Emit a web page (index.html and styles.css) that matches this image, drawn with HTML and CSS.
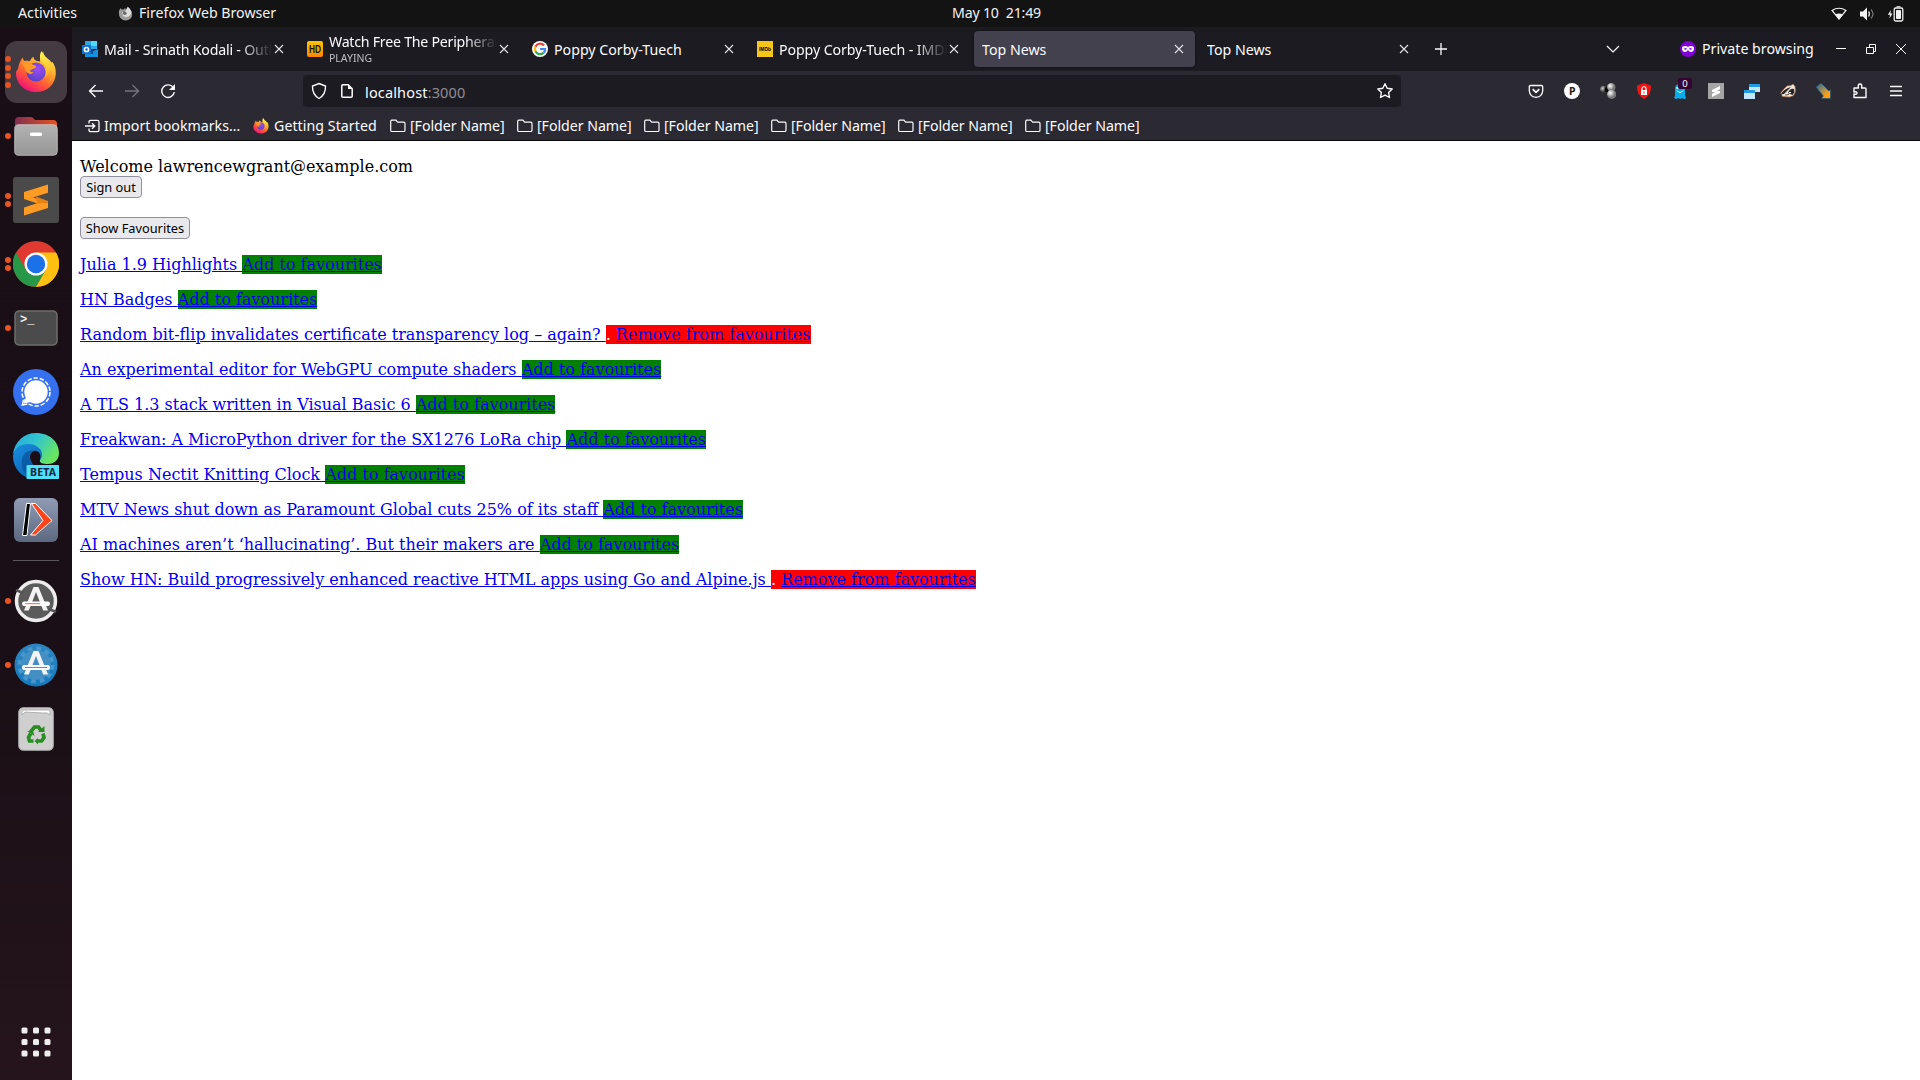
FILE: index.html
```html
<!DOCTYPE html>
<html lang="en">
<head>
<meta charset="utf-8">
<title>Top News</title>
<link rel="stylesheet" href="styles.css">
</head>
<body>
<svg class="defs" width="0" height="0" aria-hidden="true">
  <defs>
    <linearGradient id="ffBody" x1=".85" y1=".1" x2=".3" y2="1"><stop offset="0" stop-color="#fff04a"/><stop offset=".35" stop-color="#ffa52a"/><stop offset=".65" stop-color="#ff5a35"/><stop offset="1" stop-color="#f0107c"/></linearGradient>
    <linearGradient id="ffFlame" x1=".5" y1="0" x2=".6" y2="1"><stop offset="0" stop-color="#fff34f"/><stop offset=".6" stop-color="#ffc034"/><stop offset="1" stop-color="#ff8a2a"/></linearGradient>
    <radialGradient id="ffGlobe" cx=".6" cy=".35" r=".7"><stop offset="0" stop-color="#a04cf5"/><stop offset="1" stop-color="#5341c4"/></radialGradient>
    <symbol id="firefox" viewBox="0 0 40 42">
      <path d="M2 18C2.500 13 5 9 6.500 6.500C6.800 8 7.500 9.300 8.500 10C10.500 9.500 13 9.800 14 10.200C14.500 8 16 6.500 17.500 5.800C17.500 8.500 20 10.500 24 10.500C24 6 25 2.500 27 .5C28 6 33 8.500 35 13L36 10.500C39 14 40 19 39.800 23C39 34 31 41 20 41C9 41 0 33 0 22C0 20 1 19 2 18Z" fill="url(#ffBody)"/>
      <circle cx="20" cy="21" r="9.500" fill="url(#ffGlobe)"/>
      <path d="M25.500 0C23 4 23.500 9 27 12C31 15.500 31 21 29 26C33 24 34 20 33 16C36 20 36 27 32 32C40 27 40 16 34 9.500C30 6 26.500 4 25.500 0Z" fill="url(#ffFlame)"/>
      <path d="M6 12C9 10 13 11 16 13C18 14.500 21 14.500 20 16.500C18 18 15 18 14 20C15 21.500 17 21 17.500 21C15 25 10 22 9 18Z" fill="#ff9a26"/>
    </symbol>
    <symbol id="folder" viewBox="0 0 16 14"><path d="M1.700 1.200h4.200l1.700 1.900h6.100q1.300 0 1.300 1.300v6.800q0 1.300-1.300 1.300H2q-1.300 0-1.300-1.300V2.500q0-1.300 1-1.300z" fill="none" stroke="#fbfbfe" stroke-width="1.200"/></symbol>
    <symbol id="close" viewBox="0 0 10 10"><path d="M1 1l8 8M9 1L1 9" fill="none" stroke="#e4e3ea" stroke-width="1.100"/></symbol>
    <linearGradient id="metal" x2="0" y2="1"><stop stop-color="#b2b2b2"/><stop offset="1" stop-color="#969696"/></linearGradient>
    <linearGradient id="folderBack" x2="1"><stop stop-color="#812e50"/><stop offset="1" stop-color="#e95420"/></linearGradient>
    <linearGradient id="edgeTop" x2="1" y2=".5"><stop stop-color="#25a8d8"/><stop offset=".5" stop-color="#31c5d0"/><stop offset="1" stop-color="#68e660"/></linearGradient>
    <linearGradient id="edgeBlue" x2=".6" y2="1"><stop stop-color="#1b8fe0"/><stop offset="1" stop-color="#0b62b3"/></linearGradient>
    <linearGradient id="slate" x2="0" y2="1"><stop stop-color="#8f9cb4"/><stop offset="1" stop-color="#5b6880"/></linearGradient>
    <linearGradient id="softBlue" x2="0" y2="1"><stop stop-color="#2c86c2"/><stop offset="1" stop-color="#1579bd"/></linearGradient>
    <radialGradient id="ball" cx=".35" cy=".35"><stop stop-color="#fff"/><stop offset="1" stop-color="#777"/></radialGradient>
    <radialGradient id="ballDark" cx=".35" cy=".35"><stop stop-color="#ccc"/><stop offset="1" stop-color="#333"/></radialGradient>
    <linearGradient id="pencil" x2="1" y2="1"><stop stop-color="#24628e"/><stop offset=".4" stop-color="#8b8a60"/><stop offset=".75" stop-color="#ff9f12"/></linearGradient>
    <linearGradient id="hd" x2="0" y2="1"><stop stop-color="#ffc400"/><stop offset="1" stop-color="#ff8500"/></linearGradient>
  </defs>
</svg>

<header class="topbar">
  <span class="activities">Activities</span>
  <svg class="app-icon" width="15" height="15" viewBox="0 0 15 15"><path d="M1 5L2.500 2l1 1.500h2L7 2l1 2L9.500.5 12 4l1.500 1Q16 13 8 14.500Q0 14 1 5z" fill="#9b9b9b"/><path d="M4 6q4 0 4-2l2-3q4 3 3 7-3 5-8 2z" fill="#ddd"/><path d="M5 5l3 1q2 2-1 3-3 0-2-4z" fill="#6d6d6d"/></svg>
  <span class="app-name">Firefox Web Browser</span>
  <span class="clock">May 10&nbsp; 21:49</span>
  <div class="system">
    <svg width="16" height="14" viewBox="0 0 16 14"><path d="M1 3.500Q8-1 15 3.500L8 12z" fill="none" stroke="#f2f2f2" stroke-width="1.200"/><path d="M4.200 7.500Q8 5.500 11.800 7.500L8 12.500z" fill="#f2f2f2"/></svg>
    <svg width="16" height="14" viewBox="0 0 16 14"><path d="M1 4.500h3L8 .5v13l-4-4H1z" fill="#f2f2f2"/><path d="M9.500 4.500q2 2.500 0 5" fill="none" stroke="#ddd" stroke-width="1.300"/><path d="M12 2.500q4 4.500 0 9" fill="none" stroke="#777" stroke-width="1.200"/></svg>
    <svg width="17" height="16" viewBox="0 0 17 16"><path d="M4 4L.8 8.800H3L2.500 12.500 5.500 7.500H3.400z" fill="#f2f2f2"/><rect x="7.200" y="2" width="8.600" height="13" rx="1.500" fill="none" stroke="#f2f2f2" stroke-width="1.300"/><path d="M9.500 .7h4M9.500 4.500h4v8h-4z" fill="#f2f2f2" stroke="#f2f2f2"/></svg>
  </div>
</header>

<div class="desktop">
  <nav class="dock">
    <div class="app app-active"><i class="dots"><b></b><b></b><b></b><b></b></i><svg width="40" height="42"><use href="#firefox"/></svg></div>
    <div class="app"><i class="dots"><b></b></i>
      <svg width="44" height="40" viewBox="0 0 44 40"><path d="M1 5q0-4 4-4h12q2 0 4 3h18q4 0 4 4v18H1z" fill="url(#folderBack)"/><rect x=".7" y="8.700" width="42.600" height="30.600" rx="4" fill="url(#metal)" stroke="#c6c6c6" stroke-width=".8"/><rect x="16" y="16.500" width="12" height="3.500" rx="1.500" fill="#fff"/></svg></div>
    <div class="app"><i class="dots"><b></b><b></b></i>
      <svg width="46" height="46" viewBox="0 0 46 46"><rect width="46" height="46" rx="3" fill="#4a4a4a"/><path d="M11 15L35 7.500v8.300L20 20.500 35 25v6L11 38.500v-8l13-4.200L11 22z" fill="#ff9a22"/><path d="M23 19.500L35 24v2l-11 0.500z" fill="#e78312"/></svg></div>
    <div class="app"><i class="dots"><b></b><b></b></i>
      <svg width="46" height="46" viewBox="0 0 46 46"><circle cx="23" cy="23" r="23" fill="#e03a30"/><path d="M3 11.500L13 29 23 34.500 33 28.800 23 46A23 23 0 0 1 3 11.500z" fill="#279847"/><path d="M23 11.500h20A23 23 0 0 1 23 46l10-17.200z" fill="#fcc010"/><circle cx="23" cy="23" r="11.500" fill="#fff"/><circle cx="23" cy="23" r="9.200" fill="#1b72e8"/></svg></div>
    <div class="app"><i class="dots"><b></b></i>
      <svg width="44" height="36" viewBox="0 0 44 36"><rect x="1" y="1" width="42" height="34" rx="4" fill="#4b4b4b" stroke="#6e6e6e" stroke-width="1.500"/><text x="6" y="13" class="term">&gt;_</text></svg></div>
    <div class="app">
      <svg width="46" height="46" viewBox="0 0 46 46"><circle cx="23" cy="23" r="23" fill="#3470ef"/><circle cx="23" cy="23" r="14" fill="none" stroke="#fff" stroke-width="1.500" stroke-dasharray="4.500 1.800"/><circle cx="23" cy="23" r="11.700" fill="#fff"/><path d="M13 28l-2.500 6.500L18 33z" fill="#fff"/><path d="M10.500 31l-1.200 5 5-1" fill="none" stroke="#fff" stroke-width="1.400"/></svg></div>
    <div class="app">
      <svg width="46" height="46" viewBox="0 0 46 46"><path d="M0 21C2 8 11 0 23 0c14 0 23 9 23 20 0 7-5 11-11 11-5 0-9-1-8-4 3-5 0-9-5-10C12 13 3 16 0 21z" fill="url(#edgeTop)"/><path d="M0 23C1 15 7 11 15 11c8 0 14 5 14 10 0 3-1 5-2 6C29 21 25 17 21 18c-4 1-5 6-3 10 2 5 6 8 12 10l-8 8C9 46 0 35 0 23z" fill="url(#edgeBlue)"/><path d="M9 32C8 22 13 17 20 18c-4 2-4 7-2 11l5 8-3 9C14 44 9 38 9 32z" fill="#08549c" opacity=".75"/><rect x="13.500" y="32" width="32.500" height="14" rx="1" fill="#50e0fa"/><text x="17" y="43" class="beta" textLength="26">BETA</text></svg></div>
    <div class="app">
      <svg width="46" height="46" viewBox="0 0 46 46"><rect x="1" y="1" width="44" height="44" rx="6" fill="url(#slate)"/><path d="M13.500 6.500h4L14 38.500H9.500z" fill="#000" stroke="#fff"/><path d="M18.500 6.500h4L39 23.500 22.500 38h-5L30 23.500z" fill="#ff431b" stroke="#fff"/></svg></div>
    <div class="separator"></div>
    <div class="app"><i class="dots"><b></b></i>
      <svg width="44" height="44" viewBox="0 0 44 44"><circle cx="22" cy="22" r="19.500" fill="#5b5b5b" stroke="#ededed" stroke-width="3.500"/><path d="M2 11l7 3M35 30l7 3" stroke="#555" stroke-width="2.500"/><path d="M10 31.500L19.500 8h5L34 31.500h-4.800L22 13 14.800 31.500z" fill="#f4f4f4"/><rect x="8" y="22.500" width="28" height="4.500" rx="2.200" fill="#fff"/><path d="M11 24.700h15" stroke="#ed6537"/></svg></div>
    <div class="app"><i class="dots"><b></b></i>
      <svg width="44" height="44" viewBox="0 0 44 44"><circle cx="22" cy="22" r="21.500" fill="url(#softBlue)"/><circle cx="22" cy="22" r="16.500" fill="none" stroke="#4a97cb" stroke-width="4" stroke-dasharray="4.600 4.040"/><circle cx="22" cy="22" r="15" fill="#438fc4"/><path d="M10 31.500L19.500 8h5L34 31.500h-4.800L22 13 14.800 31.500z" fill="#f4f4f4"/><rect x="8" y="22" width="28" height="5" rx="2.500" fill="#fff"/><path d="M11 24.500h22" stroke="#4796cf"/></svg></div>
    <div class="app">
      <svg width="36" height="44" viewBox="0 0 36 44"><rect x=".7" y=".7" width="34.600" height="42.600" rx="4.500" fill="#cfcfcf" stroke="#aaa"/><path d="M4 8V5q0-2 3-2h23q2 0 2 2v3q-2-3-7-2L7 5z" fill="#fff" stroke="#999" stroke-width=".7"/><g fill="none" stroke="#278d20" stroke-width="3.700"><path d="M12.500 25l4-5h4l3 4"/><path d="M25 26.500l1 4-2.500 3.500H19"/><path d="M15.500 34h-4l-1-3.500 2.200-4"/></g><path d="M20 25h6.500v-6zM20 31v6.500L16.500 34zM9 24h6l1.500 5z" fill="#278d20"/></svg></div>
    <svg class="all-apps" width="30" height="30" viewBox="0 0 30 30" fill="#eee"><g id="dotRow"><rect x=".5" y=".5" width="6" height="6" rx="1.500"/><rect x="12" y=".5" width="6" height="6" rx="1.500"/><rect x="23.500" y=".5" width="6" height="6" rx="1.500"/></g><use href="#dotRow" y="11.500"/><use href="#dotRow" y="23"/></svg>
  </nav>

  <section class="window">
    <div class="tabs">
      <div class="tab"><svg width="16" height="16" viewBox="0 0 16 16"><path d="M3 0h12v8H3z" fill="#28a8ea"/><path d="M9 0h6v5H9z" fill="#50d9ff"/><path d="M3 8l6 3 7-3v8H3z" fill="#1490df"/><path d="M3 8h8v5H3z" fill="#0a4d94"/><rect y="4" width="9" height="9" fill="#1473c8"/><circle cx="4.500" cy="8.500" r="2.100" fill="none" stroke="#fff" stroke-width="1.500"/></svg><span class="label fade tight">Mail - Srinath Kodali - Outl</span><svg class="x"><use href="#close"/></svg></div>
      <div class="tab"><svg width="16" height="16" viewBox="0 0 16 16"><rect width="16" height="16" rx="2" fill="url(#hd)"/><text x="2" y="12" class="hd" textLength="12" lengthAdjust="spacingAndGlyphs">HD</text></svg><span class="label stack fade"><span class="tighter">Watch Free The Peripheral</span><small>PLAYING</small></span><svg class="x"><use href="#close"/></svg></div>
      <div class="tab"><svg width="16" height="16" viewBox="0 0 16 16"><circle cx="8" cy="8" r="8" fill="#fff"/><g fill="none" stroke-width="2.200"><path d="M12 4.500A5.200 5.200 0 0 0 3.400 5.700" stroke="#ea4335"/><path d="M3.400 5.700a5.200 5.200 0 0 0 0 4.600" stroke="#fbbc05"/><path d="M3.400 10.300A5.200 5.200 0 0 0 11.500 11.900" stroke="#34a853"/><path d="M11.500 11.900Q13.200 10.500 13.100 8H8" stroke="#4285f4"/></g></svg><span class="label">Poppy Corby-Tuech</span><svg class="x"><use href="#close"/></svg></div>
      <div class="tab"><svg width="16" height="16" viewBox="0 0 16 16"><rect width="16" height="16" fill="#f5c518"/><text x="2" y="10.300" class="imdb" textLength="12" lengthAdjust="spacingAndGlyphs">IMDb</text></svg><span class="label fade snug">Poppy Corby-Tuech - IMDb</span><svg class="x"><use href="#close"/></svg></div>
      <div class="tab tab-active"><span class="label">Top News</span><svg class="x"><use href="#close"/></svg></div>
      <div class="tab"><span class="label">Top News</span><svg class="x"><use href="#close"/></svg></div>
      <svg class="new-tab" width="14" height="14" viewBox="0 0 14 14"><path d="M7 1v12M1 7h12" stroke="#fbfbfe" stroke-width="1.300"/></svg>
      <svg class="tab-list" width="14" height="8" viewBox="0 0 14 8"><path d="M1 1l6 6 6-6" fill="none" stroke="#fbfbfe" stroke-width="1.200"/></svg>
      <svg class="mask" width="16" height="16" viewBox="0 0 16 16"><circle cx="8" cy="8" r="8" fill="#8000d7"/><path d="M2 7q0-2 3-2 2 0 3 1 1-1 3-1 3 0 3 2 0 4-3 4-2 0-3-2-1 2-3 2-3 0-3-4z" fill="#fff"/><path d="M4 8q1.500-2 3 0-1.500 1.500-3 0zM9 8q1.500-2 3 0-1.500 1.500-3 0z" fill="#8000d7"/></svg>
      <span class="private">Private browsing</span>
      <div class="win-buttons">
        <svg width="12" height="12" viewBox="0 0 12 12"><path d="M1 5.500h10" stroke="#fff"/></svg>
        <svg width="12" height="12" viewBox="0 0 12 12"><path d="M1.500 4.500h7v6h-7zM4.500 4V1.500h6v7H9" fill="none" stroke="#fff"/></svg>
        <svg width="12" height="12" viewBox="0 0 12 12"><path d="M1 1l10 10M11 1L1 11" stroke="#fff" stroke-width="1"/></svg>
      </div>
    </div>

    <div class="toolbar">
      <div class="nav-buttons">
        <svg width="16" height="16" viewBox="0 0 16 16"><path d="M15 8H1.500M7.500 2L1.500 8l6 6" fill="none" stroke="#fbfbfe" stroke-width="1.300"/></svg>
        <svg width="16" height="16" viewBox="0 0 16 16"><path d="M1 8h13.500M8.500 2l6 6-6 6" fill="none" stroke="#76757e" stroke-width="1.300"/></svg>
        <svg width="16" height="16" viewBox="0 0 16 16"><path d="M13.500 5A6.300 6.300 0 1 0 14.300 9" fill="none" stroke="#fbfbfe" stroke-width="1.400"/><path d="M15 1v6H9z" fill="#fbfbfe"/></svg>
      </div>
      <div class="urlbar">
        <svg width="16" height="18" viewBox="0 0 16 18"><path d="M8 1.500L14.500 4q.3 8.500-6.500 12.500Q1.200 12.500 1.500 4z" fill="none" stroke="#fbfbfe" stroke-width="1.400"/></svg>
        <svg width="14" height="16" viewBox="0 0 14 16"><path d="M2.800 1.800h5.400l4 4v7.400q0 1-1 1H2.800q-1 0-1-1V2.800q0-1 1-1z" fill="none" stroke="#fbfbfe" stroke-width="1.500"/><path d="M8 1.500V6h4.500z" fill="#fbfbfe"/></svg>
        <span class="url">localhost<em>:3000</em></span>
        <svg class="star" width="18" height="18" viewBox="0 0 18 18"><path d="M9 1.700l2.200 4.600 5 .7-3.600 3.500.9 5L9 13.100l-4.500 2.400.9-5L1.800 7l5-.7z" fill="none" stroke="#fbfbfe" stroke-width="1.400" stroke-linejoin="round"/></svg>
      </div>
      <div class="extensions">
        <svg viewBox="0 0 16 16"><path d="M2.500 2.500h11q1.200 0 1.200 1.200V8Q14 14 8 14.300 2 14 1.300 8V3.700q0-1.200 1.200-1.200z" fill="none" stroke="#fbfbfe" stroke-width="1.300"/><path d="M4.700 6.200L8 9.400l3.300-3.200" fill="none" stroke="#fbfbfe" stroke-width="1.700"/></svg>
        <svg viewBox="0 0 16 16"><circle cx="8" cy="8" r="8" fill="#fff"/><text x="5" y="12" class="letter-p">P</text></svg>
        <svg viewBox="0 0 16 16"><circle cx="3.700" cy="6.500" r="3.700" fill="url(#ballDark)"/><circle cx="7.500" cy="6.500" r="2.800" fill="#080808"/><circle cx="11.300" cy="4.200" r="4.200" fill="url(#ball)"/><circle cx="11.700" cy="11.300" r="4.600" fill="url(#ball)"/></svg>
        <svg viewBox="0 0 16 16"><path d="M8 0l7 2.500Q15.500 12 8 16 .5 12 1 2.500z" fill="#f31310"/><rect x="5" y="7" width="6" height="5" fill="#fff"/><path d="M6 7V5q2-3 4 0v2" fill="none" stroke="#fff" stroke-width="1.200"/><path d="M8 8.500v2" stroke="#f31310"/></svg>
        <div class="badged"><svg viewBox="0 0 16 16"><path d="M3 13V6q0-5 5-5t5 5v6l1 3.500-2.500.5-1.500-1-2 1-2-1-2 1-2-1z" fill="#00aef0"/><path d="M5 7.500q3 4 6 0" fill="none" stroke="#fff"/><path d="M4.500 4h2v2h-2z" fill="#fff"/></svg><span>0</span></div>
        <svg viewBox="0 0 16 16"><rect width="16" height="16" fill="#a5a5a5"/><path d="M4 7l8-4v3L9 8h3v2l-8 4v-3l3-2H4z" fill="#fff"/></svg>
        <svg viewBox="0 0 16 16"><path d="M5 1h11v3H5zM0 7h11v3H0z" fill="#229be6"/><path d="M5 4h11v5h-5V7H5zM0 10h11v6H0z" fill="#c5e5fb"/></svg>
        <svg viewBox="0 0 16 16"><path d="M.7 10L4 6l3-3 4-.5 2-1.500 2 2.500.5 5-2 4-4 1.500-7-.5z" fill="#efe8df" stroke="#b0703f" stroke-width=".7"/><path d="M.8 11.500Q3 7 8 5l3-1-3 3-4 4zM8 10q2-5 6-4l.5 3-2 3z" fill="#282522"/><path d="M9 9.500h2" stroke="#fff"/><path d="M5 12l4-.5" stroke="#6b5546"/></svg>
        <svg viewBox="0 0 16 16"><path d="M0 4l5-4 8 8 1.500-1.500V15.500H5.500L7.300 13z" fill="url(#pencil)" stroke="#1d5077" stroke-width=".7"/></svg>
        <svg viewBox="0 0 16 16"><path d="M2 14.500V11q3 .8 3-1t-3-1V5h4.500Q5.500 1 8 1t1.500 4H13q1 0 1 1v8.500z" fill="none" stroke="#fbfbfe" stroke-width="1.400" stroke-linejoin="round"/></svg>
        <svg viewBox="0 0 16 16"><path d="M2 3.500h12M2 8h12M2 12.500h12" stroke="#fbfbfe" stroke-width="1.300"/></svg>
      </div>
    </div>

    <div class="bookmarks">
      <div class="bm bm-import"><svg width="15" height="14" viewBox="0 0 15 14"><path d="M4 4.500V3q0-1.700 1.700-1.700h6.600Q14 1.300 14 3v8q0 1.700-1.700 1.700H5.700Q4 12.700 4 11V9.500M0 7h9.500M7 4.200L9.800 7 7 9.800" fill="none" stroke="#fbfbfe" stroke-width="1.300"/></svg><span>Import bookmarks…</span></div>
      <div class="bm bm-start"><svg width="16" height="16"><use href="#firefox"/></svg><span>Getting Started</span></div>
      <div class="bm"><svg width="16" height="14"><use href="#folder"/></svg><span>[Folder Name]</span></div>
      <div class="bm"><svg width="16" height="14"><use href="#folder"/></svg><span>[Folder Name]</span></div>
      <div class="bm"><svg width="16" height="14"><use href="#folder"/></svg><span>[Folder Name]</span></div>
      <div class="bm"><svg width="16" height="14"><use href="#folder"/></svg><span>[Folder Name]</span></div>
      <div class="bm"><svg width="16" height="14"><use href="#folder"/></svg><span>[Folder Name]</span></div>
      <div class="bm"><svg width="16" height="14"><use href="#folder"/></svg><span>[Folder Name]</span></div>
    </div>

    <main class="page">
      <div class="welcome">Welcome lawrencewgrant@example.com</div>
      <button class="btn sign-out">Sign out</button>
      <button class="btn favourites">Show Favourites</button>
      <p><a href="#">Julia 1.9 Highlights </a><a href="#" class="add">Add to favourites</a></p>
      <p><a href="#">HN Badges </a><a href="#" class="add">Add to favourites</a></p>
      <p><a href="#">Random bit-flip invalidates certificate transparency log – again? </a><span class="remove">. <a href="#">Remove from favourites</a></span></p>
      <p><a href="#">An experimental editor for WebGPU compute shaders </a><a href="#" class="add">Add to favourites</a></p>
      <p><a href="#">A TLS 1.3 stack written in Visual Basic 6 </a><a href="#" class="add">Add to favourites</a></p>
      <p><a href="#">Freakwan: A MicroPython driver for the SX1276 LoRa chip </a><a href="#" class="add">Add to favourites</a></p>
      <p><a href="#">Tempus Nectit Knitting Clock </a><a href="#" class="add">Add to favourites</a></p>
      <p><a href="#">MTV News shut down as Paramount Global cuts 25% of its staff </a><a href="#" class="add">Add to favourites</a></p>
      <p><a href="#">AI machines aren’t ‘hallucinating’. But their makers are </a><a href="#" class="add">Add to favourites</a></p>
      <p><a href="#">Show HN: Build progressively enhanced reactive HTML apps using Go and Alpine.js </a><span class="remove">. <a href="#">Remove from favourites</a></span></p>
    </main>
  </section>
</div>
</body>
</html>
```

FILE: styles.css
```css
* { box-sizing: border-box; }
body { margin: 0; width: 1920px; height: 1080px; overflow: hidden; display: flex; flex-direction: column; font: 14.2px/20px "Noto Sans", "Open Sans", sans-serif; color: #fbfbfe; }
svg { display: block; flex: none; }
.defs { position: absolute; }

.topbar { height: 27px; flex: none; background: #131313; display: grid; grid-template-columns: 100px 21px 813px 1fr auto; align-items: center; padding: 0 16px 0 18px; color: #f2f2f2; }
.activities, .app-name, .clock { white-space: nowrap; padding-bottom: 2px; }
.clock { letter-spacing: -.2px; }
.system { display: flex; align-items: center; gap: 12px; }

.desktop { flex: 1; display: flex; min-height: 0; }
.dock { width: 72px; flex: none; background: linear-gradient(#190e15, #1a0f16 60%, #25141c); padding: 13px 0 23px; display: flex; flex-direction: column; align-items: center; }
.app { width: 72px; height: 64px; flex: none; display: grid; place-items: center; position: relative; }
.app-active { width: 62px; height: 62px; margin: 1px 0; border-radius: 12px; background: #443a41; }
.dots { position: absolute; left: 5px; top: 0; bottom: 0; display: flex; flex-direction: column; justify-content: center; gap: 2.400px; }
.app-active .dots { left: 0; }
.dots b { width: 6px; height: 6px; border-radius: 50%; background: #e95420; }
.separator { width: 46px; height: 1px; margin: 8px 0; background: #5c5559; }
.all-apps { margin-top: auto; }
.term { font: bold 12px "Liberation Mono", monospace; fill: #eee; }
.beta { font: bold 10.500px "Noto Sans", sans-serif; fill: #14243a; }
.hd { font: bold 10px "Liberation Sans", sans-serif; fill: #151515; }
.imdb { font: bold 6px "Liberation Sans", sans-serif; fill: #000; }
.letter-p { font: bold 10.500px "Noto Sans", sans-serif; fill: #222; }

.window { flex: 1; min-width: 0; display: flex; flex-direction: column; background: #fff; }
.tabs { height: 44px; background: #1c1b22; display: flex; align-items: center; padding: 0 13px 0 2px; }
.tab { width: 221px; height: 36px; margin-right: 4px; border-radius: 4px; display: flex; align-items: center; padding: 0 11px 0 8px; gap: 6px; }
.tab-active { background: #42414d; box-shadow: 0 0 3px #0008; }
.label { flex: 1; min-width: 0; white-space: nowrap; overflow: hidden; padding-top: 2px; margin-right: -4px; }
.fade { -webkit-mask-image: linear-gradient(to right, #000 calc(100% - 32px), transparent); mask-image: linear-gradient(to right, #000 calc(100% - 32px), transparent); }
.snug { letter-spacing: -.1px; }
.tight { letter-spacing: -.2px; }
.tighter { letter-spacing: -.25px; }
.stack { display: flex; flex-direction: column; line-height: 18px; padding: 0; }
.stack small { font-size: 10.500px; line-height: 14px; color: #bebdc5; }
.x { width: 10px; height: 10px; }
.new-tab { margin-left: 10px; }
.tab-list { margin-left: 158px; }
.mask { margin-left: 60px; margin-right: 6px; }
.private { white-space: nowrap; flex: 1; }
.win-buttons { display: flex; gap: 18px; }

.toolbar { height: 40px; background: #2b2a33; display: flex; align-items: center; padding: 0 16px; }
.nav-buttons { display: flex; gap: 20px; width: 215px; }
.urlbar { width: 1098px; height: 32px; background: #1c1b22; border-radius: 4px; display: flex; align-items: center; padding: 0 7px 0 8px; }
.urlbar svg + svg { margin: 0 11px 0 13px; }
.url { flex: 1; padding-top: 2px; font-size: 14.5px; letter-spacing: .15px; }
.url em { font-style: normal; color: #8f8e96; }
.extensions { margin-left: auto; display: flex; gap: 20px; }
.extensions svg { width: 16px; height: 16px; }
.badged { position: relative; width: 16px; }
.badged span { position: absolute; left: 6px; top: -5px; width: 14px; height: 11px; background: #330434; border-radius: 2px; font-size: 9.500px; line-height: 11px; text-align: center; }

.bookmarks { height: 30px; background: #2b2a33; border-bottom: 1px solid #0c0c0d; display: flex; align-items: center; padding: 0 0 0 13px; }
.bm { display: flex; align-items: center; gap: 4px; width: 127px; white-space: nowrap; letter-spacing: -.05px; }
.bm-import { width: 168px; gap: 4px; letter-spacing: 0; }
.bm-start { width: 137px; gap: 5px; letter-spacing: .05px; }

.page { padding: 16px 8px; font: 16px/19px "DejaVu Serif", serif; color: #000; }
.btn { display: block; height: 22px; padding: 0; border: 1px solid #8f8f9d; border-radius: 4px; background: #e9e9ed; color: #000; font: 12.800px/20px "Noto Sans", sans-serif; white-space: nowrap; }
.sign-out { width: 62px; margin-bottom: 19px; }
.favourites { width: 110px; }
.page p { margin: 16px 0 0; white-space: nowrap; }
.page a { color: #0000ee; }
.add { background: green; }
.remove { background: red; color: #fff; }
```
